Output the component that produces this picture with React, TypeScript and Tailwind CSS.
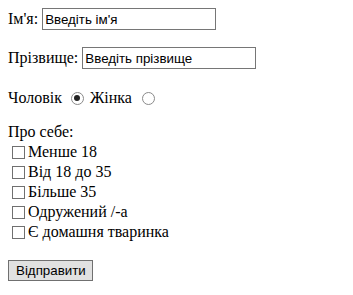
export default function App() {
  const checks = ["Менше 18", "Від 18 до 35", "Більше 35", "Одружений /-а", "Є домашня тваринка"];
  return (
    <div className="min-h-screen bg-white p-2 text-[16px] text-black font-['Liberation_Serif','Times_New_Roman',serif] leading-[18px]">
      <form onSubmit={(e) => e.preventDefault()}>
        <div className="h-[22px] flex items-center">
          <span>Ім'я:&nbsp;</span>
          <input
            defaultValue="Введіть ім'я"
            className="w-[174px] h-[22px] border border-[#767676] px-[2px] text-[13.33px] font-['Liberation_Sans',Arial,sans-serif] outline-none"
          />
        </div>
        <div className="h-[22px] mt-[17px] flex items-center">
          <span>Прізвище:&nbsp;</span>
          <input
            defaultValue="Введіть прізвище"
            className="w-[174px] h-[22px] border border-[#767676] px-[2px] text-[13.33px] font-['Liberation_Sans',Arial,sans-serif] outline-none"
          />
        </div>
        <div className="h-[22px] mt-[18px] flex items-center">
          <span>Чоловік</span>
          <span className="ml-[9px] mr-[6px] w-[13px] h-[13px] rounded-full border border-[#8a8a8a] flex items-center justify-center">
            <span className="w-[6px] h-[6px] rounded-full bg-[#222]" />
          </span>
          <span>Жінка</span>
          <span className="ml-[10px] w-[13px] h-[13px] rounded-full border border-[#8a8a8a]" />
        </div>
        <div className="mt-[13px] h-[20px] flex items-center">Про себе:</div>
        <div className="flex flex-col">
          {checks.map((c) => (
            <label key={c} className="h-[20px] flex items-center">
              <span className="ml-[4px] mr-[3px] w-[13px] h-[13px] border border-[#707070] bg-white" />
              <span>{c}</span>
            </label>
          ))}
        </div>
        <button
          type="submit"
          className="mt-[18px] h-[21px] pl-[7px] pr-[6px] border border-[#707070] bg-[#e1e1e1] text-[13.33px] leading-none font-['Liberation_Sans',Arial,sans-serif] text-black"
        >
          Відправити
        </button>
      </form>
    </div>
  );
}
